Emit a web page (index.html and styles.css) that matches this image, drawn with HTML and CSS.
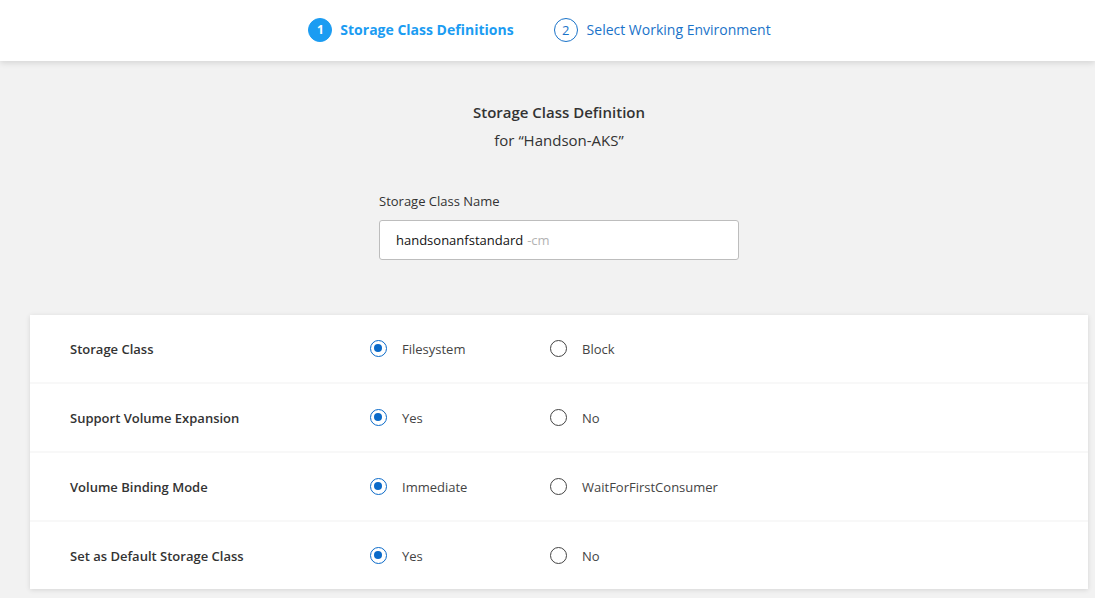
FILE: index.html
```html
<!DOCTYPE html>
<html>
<head>
<meta charset="utf-8">
<link rel="stylesheet" href="styles.css">
</head>
<body>
<header class="topbar">
  <div class="step active"><span class="step-num">1</span><span class="step-label">Storage Class Definitions</span></div>
  <div class="step"><span class="step-num">2</span><span class="step-label">Select Working Environment</span></div>
</header>
<main class="main">
  <div class="intro">
    <h1 class="title">Storage Class Definition</h1>
    <p class="subtitle">for “Handson-AKS”</p>
  </div>
  <div class="field">
    <label class="field-label">Storage Class Name</label>
    <div class="input"><span class="input-value">handsonanfstandard</span><span class="input-suffix">-cm</span></div>
  </div>
  <section class="card">
    <div class="row">
      <div class="row-label">Storage Class</div>
      <div class="option"><span class="radio checked"></span>Filesystem</div>
      <div class="option"><span class="radio"></span>Block</div>
    </div>
    <div class="row">
      <div class="row-label">Support Volume Expansion</div>
      <div class="option"><span class="radio checked"></span>Yes</div>
      <div class="option"><span class="radio"></span>No</div>
    </div>
    <div class="row">
      <div class="row-label">Volume Binding Mode</div>
      <div class="option"><span class="radio checked"></span>Immediate</div>
      <div class="option"><span class="radio"></span>WaitForFirstConsumer</div>
    </div>
    <div class="row">
      <div class="row-label">Set as Default Storage Class</div>
      <div class="option"><span class="radio checked"></span>Yes</div>
      <div class="option"><span class="radio"></span>No</div>
    </div>
  </section>
</main>
</body>
</html>
```

FILE: styles.css
```css
* { box-sizing: border-box; }
html, body { margin: 0; padding: 0; }
body {
  background: #f2f2f2;
  font-family: "Open Sans", "Noto Sans", sans-serif;
  color: #333;
  font-size: 13px;
  width: 1095px;
  height: 598px;
  overflow: hidden;
}
.topbar {
  height: 61px;
  background: #fff;
  display: flex;
  align-items: center;
  justify-content: center;
  gap: 40px;
  padding-right: 16px;
  padding-bottom: 2px;
  box-shadow: 0 2px 6px rgba(0,0,0,0.12);
  position: relative;
  z-index: 1;
}
.step {
  display: flex;
  align-items: center;
  gap: 9px;
  color: #1a73c9;
  font-size: 14px;
}
.step-num {
  width: 24px;
  height: 24px;
  border-radius: 50%;
  border: 1.5px solid #1a73c9;
  display: flex;
  align-items: center;
  justify-content: center;
  font-size: 13px;
}
.step.active { color: #1b9cf2; font-weight: 700; gap: 8px; }
.step.active .step-num {
  background: #1b9cf2;
  border-color: #1b9cf2;
  color: #fff;
  font-size: 12px;
}
.main {
  padding: 0 7px 0 30px;
}
.intro {
  text-align: center;
  padding-top: 40px;
}
.title {
  margin: 0;
  font-size: 15px;
  font-weight: 600;
  line-height: 22px;
  color: #333;
}
.subtitle {
  margin: 6px 0 0;
  font-size: 15px;
  line-height: 22px;
  color: #333;
}
.field {
  width: 360px;
  margin: 41px auto 0;
}
.field-label {
  display: block;
  font-size: 13px;
  line-height: 18px;
  margin-bottom: 10px;
}
.input {
  height: 40px;
  background: #fff;
  border: 1px solid #bdbdbd;
  border-radius: 3px;
  display: flex;
  align-items: center;
  padding-left: 16px;
  font-size: 13px;
}
.input-value { color: #111; }
.input-suffix { color: #b3b3b3; margin-left: 4px; }
.card {
  margin-top: 55px;
  background: #fff;
  box-shadow: 0 1px 5px rgba(0,0,0,0.12);
}
.row {
  height: 67px;
  display: grid;
  grid-template-columns: 300px 180px 1fr;
  align-items: center;
  padding-left: 40px;
}
.row + .row {
  height: 69px;
  border-top: 2px solid #f8f8f8;
}
.row-label {
  font-weight: 600;
  font-size: 13px;
}
.option {
  display: flex;
  align-items: center;
  gap: 15px;
  font-size: 13px;
  color: #444;
}
.radio {
  width: 17px;
  height: 17px;
  border-radius: 50%;
  border: 1.5px solid #444;
  display: inline-block;
  position: relative;
  flex: none;
}
.radio.checked {
  border-color: #0a6ac9;
}
.radio.checked::after {
  content: "";
  position: absolute;
  left: 3px;
  top: 3px;
  width: 8px;
  height: 8px;
  border-radius: 50%;
  background: #0a6ac9;
}
```
